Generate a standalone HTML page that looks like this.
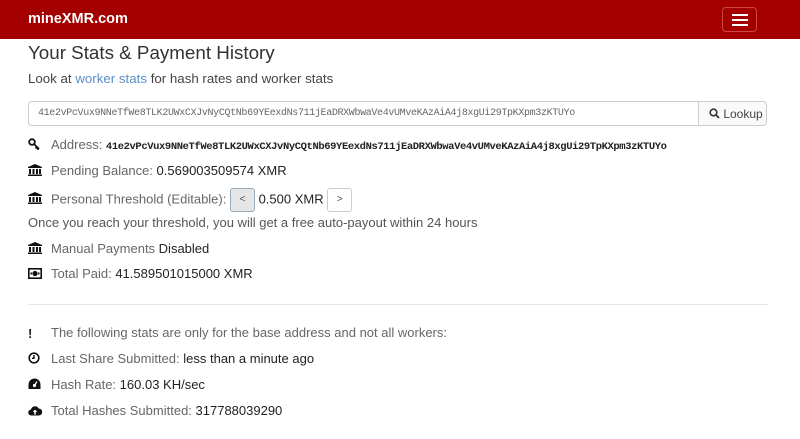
<!DOCTYPE html>
<html><head><style>
*{margin:0;padding:0;box-sizing:border-box}
body{width:800px;height:439px;overflow:hidden;background:#fff;font-family:"Liberation Sans",sans-serif;color:#222;font-size:13px}
.nav{height:39px;background:#a50000;position:relative}
.brand{position:absolute;left:28px;top:11px;color:#fff;font-size:14.5px;font-weight:bold}
.tog{position:absolute;left:722px;top:7px;width:35px;height:25px;border:1px solid #c44;border-radius:4px}
.tog i{position:absolute;left:9px;width:16px;height:2px;background:#fff}
h1{position:absolute;left:28px;top:42px;font-weight:normal;font-size:18.8px;color:#333}
.sub{position:absolute;left:28px;top:71px;font-size:13.3px;color:#444}
.sub a{color:#5b8fc7}
.inp{position:absolute;left:28px;top:101px;width:671px;height:25px;border:1px solid #ccc;border-radius:4px 0 0 4px;font-family:"Liberation Mono",monospace;font-size:10px;color:#666;padding:6px 9px;letter-spacing:-0.35px;white-space:nowrap}
.btn{position:absolute;left:698px;top:101px;width:69px;height:25px;border:1px solid #ccc;border-radius:0 4px 4px 0;background:#fafafa;font-size:12px;color:#444;padding:5px 0 0 10px;white-space:nowrap}
.row{position:absolute;left:28px;font-size:13px;white-space:nowrap}
.row .ic{display:inline-block;width:23px;vertical-align:-1px}
.l{color:#666}
.mono{font-family:"Liberation Mono",monospace;font-weight:bold;font-size:10.5px;letter-spacing:-0.4px}
.sb{display:inline-block;width:25px;height:24px;border:1px solid #ccc;border-radius:3px;vertical-align:middle;text-align:center;font-size:10px;color:#555;line-height:22px}
hr{position:absolute;left:28px;top:304px;width:740px;border:0;border-top:1px solid #e5e5e5}
</style></head><body>
<div class="nav"><div class="brand">mineXMR.com</div><div class="tog"><i style="top:6px"></i><i style="top:11px"></i><i style="top:16px"></i></div></div>
<h1>Your Stats &amp; Payment History</h1>
<div class="sub">Look at <a>worker stats</a> for hash rates and worker stats</div>
<div class="inp">41e2vPcVux9NNeTfWe8TLK2UWxCXJvNyCQtNb69YEexdNs711jEaDRXWbwaVe4vUMveKAzAiA4j8xgUi29TpKXpm3zKTUYo</div>
<div class="btn"><svg width="11" height="11" viewBox="0 0 11 11" style="vertical-align:-1px"><circle cx="4.5" cy="4.5" r="3.3" fill="none" stroke="#333" stroke-width="1.6"/><path d="M7 7l3 3" stroke="#333" stroke-width="1.8"/></svg> Lookup</div>
<div class="row" style="top:137px"><span class="ic"><svg width="13" height="12" viewBox="0 0 13 12"><circle cx="4" cy="4" r="2.8" fill="none" stroke="#111" stroke-width="1.8"/><path d="M6 6l5 5M9 9l-1.5 1.5M10.5 10.5l-1.2 1.2" stroke="#111" stroke-width="1.8"/></svg></span><span class="l">Address: </span><span class="mono">41e2vPcVux9NNeTfWe8TLK2UWxCXJvNyCQtNb69YEexdNs711jEaDRXWbwaVe4vUMveKAzAiA4j8xgUi29TpKXpm3zKTUYo</span></div>
<div class="row" style="top:163px"><span class="ic"><svg width="14" height="12" viewBox="0 0 14 12"><path d="M0 3L7 0L14 3V4H0z M1 5h2v5H1z M4.5 5h2v5h-2z M8 5h2v5H8z M11 5h2v5h-2z M0 10.5h14V12H0z" fill="#111"/></svg></span><span class="l">Pending Balance: </span>0.569003509574 XMR</div>
<div class="row" style="top:188px"><span class="ic"><svg width="14" height="12" viewBox="0 0 14 12"><path d="M0 3L7 0L14 3V4H0z M1 5h2v5H1z M4.5 5h2v5h-2z M8 5h2v5H8z M11 5h2v5h-2z M0 10.5h14V12H0z" fill="#111"/></svg></span><span class="l">Personal Threshold (Editable): </span><span class="sb" style="background:#e6e6e6;border-color:#9ab">&lt;</span> 0.500 XMR <span class="sb">&gt;</span></div>
<div class="row" style="top:215px;color:#555">Once you reach your threshold, you will get a free auto-payout within 24 hours</div>
<div class="row" style="top:241px"><span class="ic"><svg width="14" height="12" viewBox="0 0 14 12"><path d="M0 3L7 0L14 3V4H0z M1 5h2v5H1z M4.5 5h2v5h-2z M8 5h2v5H8z M11 5h2v5h-2z M0 10.5h14V12H0z" fill="#111"/></svg></span><span class="l">Manual Payments </span>Disabled</div>
<div class="row" style="top:266px"><span class="ic"><svg width="14" height="11" viewBox="0 0 14 11"><rect x="0.8" y="0.8" width="12.4" height="9.4" fill="none" stroke="#111" stroke-width="1.6"/><circle cx="7" cy="5.5" r="2.6" fill="#111"/><rect x="2.5" y="4.5" width="1.5" height="2" fill="#111"/><rect x="10" y="4.5" width="1.5" height="2" fill="#111"/></svg></span><span class="l">Total Paid: </span>41.589501015000 XMR</div>
<hr>
<div class="row" style="top:325px"><span class="ic" style="font-weight:bold">!</span><span class="l">The following stats are only for the base address and not all workers:</span></div>
<div class="row" style="top:351px"><span class="ic"><svg width="12" height="12" viewBox="0 0 12 12"><circle cx="6" cy="6" r="4.8" fill="none" stroke="#111" stroke-width="1.6"/><path d="M6 3v3.3H4" fill="none" stroke="#111" stroke-width="1.4"/></svg></span><span class="l">Last Share Submitted: </span>less than a minute ago</div>
<div class="row" style="top:377px"><span class="ic"><svg width="13" height="12" viewBox="0 0 13 12"><path d="M6.5 0.5A6 6 0 0 0 0.5 6.5V11h12V6.5A6 6 0 0 0 6.5 0.5z" fill="#111"/><circle cx="6.5" cy="7.5" r="1.6" fill="#fff"/><path d="M6.5 7.5L9 3.5" stroke="#fff" stroke-width="1.2"/></svg></span><span class="l">Hash Rate: </span>160.03 KH/sec</div>
<div class="row" style="top:403px"><span class="ic"><svg width="14" height="11" viewBox="0 0 14 11"><path d="M3.5 10.5A3 3 0 0 1 3 4.5A4 4 0 0 1 10.5 3.5A3.5 3.5 0 0 1 11 10.5z" fill="#111"/><path d="M7 4.5l-2.3 2.5h1.5v2.5h1.6V7h1.5z" fill="#fff"/></svg></span><span class="l">Total Hashes Submitted: </span>317788039290</div>
</body></html>
